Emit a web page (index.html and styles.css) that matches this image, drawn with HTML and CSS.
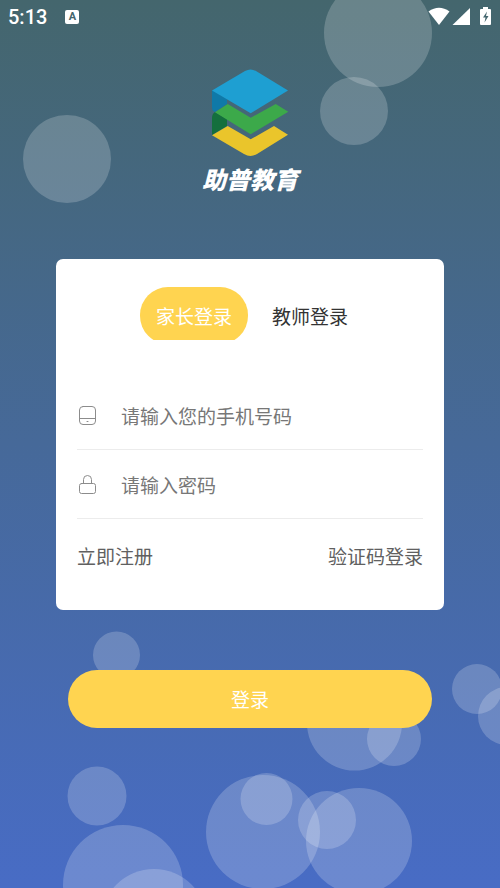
FILE: index.html
```html
<!DOCTYPE html>
<html lang="zh-CN">
<head>
<meta charset="utf-8">
<meta name="viewport" content="width=device-width, initial-scale=1">
<title>助普教育</title>
<link rel="stylesheet" href="styles.css">
</head>
<body>
<svg class="bubbles" viewBox="0 0 500 888" preserveAspectRatio="xMidYMid slice" aria-hidden="true">
  <circle cx="378" cy="33" r="54"/>
  <circle cx="354" cy="111" r="34"/>
  <circle cx="67" cy="159" r="44"/>
  <circle cx="116.500" cy="655" r="23.500"/>
  <circle cx="477" cy="689" r="25"/>
  <circle cx="507" cy="716" r="29"/>
  <circle cx="354.500" cy="723" r="47.500"/>
  <circle cx="394" cy="739" r="27"/>
  <circle cx="97" cy="796" r="29.500"/>
  <circle cx="123" cy="885" r="60"/>
  <circle cx="154" cy="922" r="53"/>
  <circle cx="263" cy="832" r="57"/>
  <circle cx="266.500" cy="799" r="26"/>
  <circle cx="327" cy="820" r="29"/>
  <circle cx="359" cy="841" r="53"/>
</svg>
<header class="status">
  <span class="clock">5:13</span>
  <span class="keyboard">A</span>
  <svg class="signals" width="64" height="20" viewBox="0 0 64 20" aria-hidden="true">
    <path d="M.5 4.500Q11 -3 21.500 4.500L11 18Z"/>
    <path d="M42 1V18H24.500Z"/>
    <path fill-rule="evenodd" d="M55 0h5v2h2q1 0 1 1v14q0 1-1 1h-9q-1 0-1-1v-14q0-1 1-1h2ZM59 4.500l-4 6h2.500l-1 5 4-6.500H58Z"/>
  </svg>
</header>
<main class="page">
  <div class="brand">
    <svg width="78" height="90" viewBox="0 0 78 90" aria-hidden="true">
      <path fill="#0f79a8" d="M1 22L16 31V36L4 44Q1 43 1 39Z"/>
      <path fill="#146f3d" d="M4 44L16 51V58L1 67V50Q1 46 4 44Z"/>
      <path fill="#1e9fd2" d="M1 22.500L34 3Q39.500 0 45 3L77 22.500L39.700 45.300Z"/>
      <path fill="#3ca94a" d="M4 44.300L16.700 36L39.700 49.700L64.700 36L77.300 43.700L39.700 66.300Z"/>
      <path fill="#eac52b" d="M1 67.300L16.700 58L39.700 71.300L63 58L77 66.700L46 86Q39.500 90 33 86Z"/>
    </svg>
    <h1 class="name">助普教育</h1>
  </div>
  <form class="login">
    <div class="card">
      <div class="tabs">
        <button type="button" class="tab active">家长登录</button>
        <button type="button" class="tab">教师登录</button>
      </div>
      <div class="field">
        <label for="phone" aria-label="手机号码">
          <svg width="20" height="24" viewBox="0 0 20 24"><rect x="2.500" y="3.500" width="16" height="18" rx="3.500"/><path d="M2.500 15.500h16M10 18.500h1"/></svg>
        </label>
        <input id="phone" type="tel" placeholder="请输入您的手机号码">
      </div>
      <div class="field">
        <label for="password" aria-label="密码">
          <svg width="20" height="24" viewBox="0 0 20 24"><rect x="2.500" y="11.500" width="16" height="10" rx="2"/><path d="M6.500 11.500V7.500a4 4 0 0 1 8 0v4"/></svg>
        </label>
        <input id="password" type="password" placeholder="请输入密码">
      </div>
      <div class="links">
        <a href="#register">立即注册</a>
        <a href="#code">验证码登录</a>
      </div>
    </div>
    <button type="submit" class="submit">登录</button>
  </form>
</main>
</body>
</html>
```
FILE: styles.css
```css
* {
  box-sizing: border-box;
}

body {
  position: relative;
  min-height: 100vh;
  margin: 0;
  overflow-x: hidden;
  background: linear-gradient(#44666d, #486cc5);
  font-family: "Noto Sans CJK SC", sans-serif;
  font-size: 19px;
  line-height: 28px;
}

button,
input {
  padding: 0;
  border: 0;
  background: none;
  font: inherit;
}

.bubbles {
  position: absolute;
  inset: 0;
  z-index: -1;
  width: 100%;
  height: 100%;
  fill: rgba(255, 255, 255, 0.2);
}

.status {
  display: flex;
  align-items: center;
  height: 34px;
  padding: 0 8px;
  color: #fff;
}

.clock {
  font: 500 20px/34px Roboto, sans-serif;
}

.keyboard {
  width: 14px;
  height: 14px;
  margin-left: 18px;
  border-radius: 2px;
  background: #fff;
  color: #44666d;
  font: 700 11px/14px Roboto, sans-serif;
  text-align: center;
}

.signals {
  margin-left: auto;
  fill: #fff;
}

.brand {
  display: flex;
  flex-direction: column;
  align-items: center;
  padding-top: 34px;
}

.brand svg {
  display: block;
}

.name {
  margin: 5px 0 0;
  color: #fff;
  font-size: 24px;
  font-style: italic;
  font-weight: 900;
  line-height: 32px;
}

.login {
  margin: 64px 56px 0;
}

.card {
  padding: 28px 21px 40px;
  border-radius: 7px;
  background: #fff;
}

.tabs {
  display: flex;
  justify-content: center;
  margin-bottom: 37px;
  padding-left: 4px;
}

.tab {
  height: 57px;
  padding: 0 16px;
  color: #333;
}

.active {
  margin-right: 8px;
  border-radius: 28px;
  background: #ffd450;
  color: #fff;
  clip-path: inset(0 0 4px);
}

.field {
  display: flex;
  align-items: center;
  height: 69px;
  border-bottom: 1px solid #ececec;
}

.field label {
  display: flex;
  width: 44px;
}

.field svg {
  fill: none;
  stroke: #8c8c8c;
  stroke-linecap: round;
}

.field input {
  flex: 1;
  min-width: 0;
  height: 100%;
  outline: 0;
  color: #333;
}

.field input::placeholder {
  color: #777;
  opacity: 1;
}

.links {
  display: flex;
  justify-content: space-between;
  margin-top: 23px;
}

.links a {
  color: #606060;
  text-decoration: none;
}

.submit {
  display: block;
  width: calc(100% - 24px);
  height: 58px;
  margin: 60px auto;
  border-radius: 29px;
  background: #ffd450;
  color: #fff;
}
```
